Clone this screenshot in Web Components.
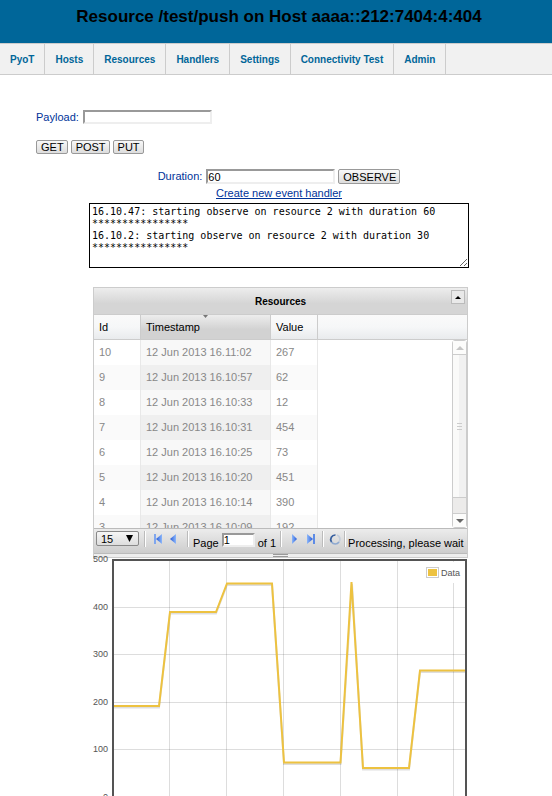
<!DOCTYPE html>
<html lang="en">
<head>
<meta charset="utf-8">
<title>PyoT resource</title>
<style>
body { margin: 0; background: #fff; color: #039; font: 11px/13px "Liberation Sans", Arial, sans-serif; }
</style>
</head>
<body>
<pyot-page></pyot-page>
<script>
const define = (name, html, setup) => customElements.define(name, class extends HTMLElement {
  constructor() {
    super();
    this.attachShadow({ mode: "open" }).innerHTML = html;
  }
  connectedCallback() { if (setup) setup(this, this.shadowRoot); }
});

define("page-header", `
<style>
:host { display: block; height: 43px; background: #069; color: #000; text-align: center; padding: 0 0 0 6px; box-sizing: border-box; }
h1 { margin: 0; font-size: 17px; line-height: 34px; white-space: nowrap; }
</style>
<h1><slot></slot></h1>`);

define("nav-bar", `
<style>
:host { display: block; }
nav { display: flex; height: 30px; background: #f1f1f1; border: solid #ccc; border-width: 1px 0; }
a { padding: 0 10px; border-right: 1px solid #ccc; color: #069; font-weight: bold; font-size: 10px; line-height: 31px; text-decoration: none; white-space: nowrap; }
</style>
<nav></nav>`, (el, root) => {
  root.querySelector("nav").innerHTML = el.getAttribute("items").split(",").map(t => `<a href="#">${t}</a>`).join("");
});

define("push-button", `
<style>
:host { display: inline-flex; }
button { font: 11px/12px "Liberation Sans", Arial, sans-serif; color: #000; height: var(--h, 14px); padding: 0 3px 0 4px; border: 1px solid #999; border-radius: 2px; background: linear-gradient(#f8f8f8, #ddd); }
</style>
<button type="button"><slot></slot></button>`);

define("text-field", `
<style>
:host { display: inline-flex; align-items: center; gap: 4px; }
input { box-sizing: border-box; width: 129px; height: var(--h, 14px); padding: 0; border: 2px solid; border-color: #999 #eee #eee #999; border-radius: 0; background: #fff; color: #000; font: 11px/11px "Liberation Sans", Arial, sans-serif; }
</style>
<label for="f"></label><input id="f" type="text">`, (el, root) => {
  root.querySelector("label").textContent = el.getAttribute("label");
  root.querySelector("input").value = el.getAttribute("value") || "";
});

define("log-area", `
<style>
:host { display: block; width: 380px; max-width: 100%; }
textarea { display: block; box-sizing: border-box; width: 100%; height: 65px; margin: 0; padding: 2px; border: 1px solid #000; background: #fff; color: #000; font: 10px/12px "DejaVu Sans Mono", monospace; }
</style>
<textarea aria-label="Log"></textarea>`, (el, root) => {
  root.querySelector("textarea").value = el.textContent.trim();
});

define("pager-bar", `
<style>
:host { display: flex; box-sizing: border-box; height: 25px; padding: 2px 0 0 2px; border-top: 1px solid #bbb; background: linear-gradient(#ececec, #cdcdcd); color: #000; overflow: hidden; white-space: nowrap; }
.size { position: relative; display: block; width: 43px; height: 15px; flex: none; }
select { appearance: none; box-sizing: border-box; width: 43px; height: 15px; margin: 0; padding: 0 4px; border: 1px solid #888; border-radius: 2px; background: linear-gradient(#f6f6f6, #ddd); font: 11px/12px "Liberation Sans", Arial, sans-serif; color: #000; }
.size svg { position: absolute; right: 6px; top: 4px; pointer-events: none; }
i { flex: none; width: 1px; height: 16px; margin: 0 4px; background: #bbb; border-right: 1px solid #fff; }
button { flex: none; width: 16px; height: 16px; padding: 0; border: 0; background: none; }
svg { display: block; }
.page { display: flex; gap: 3px; line-height: 20px; padding-top: 2px; }
.page input { box-sizing: border-box; width: 33px; height: 14px; padding: 0; border: 2px solid; border-color: #999 #eee #eee #999; font: 11px/11px "Liberation Sans", Arial, sans-serif; }
.msg { line-height: 20px; padding-top: 2px; }
.size + i { margin: 0 5px; }
</style>
<span class="size"><select aria-label="Rows per page"><option>15</option></select><svg width="7" height="7"><path d="M0 0H7L3.5 7Z"/></svg></span>
<i></i>
<button aria-label="First page"><svg width="16" height="16"><defs><linearGradient id="a"><stop stop-color="#2458d8"/><stop offset="1" stop-color="#8db8fa"/></linearGradient></defs><path d="M3 3h2v10H3z" fill="#7fa6ee"/><path d="M11 3v10L5 8z" fill="url(#a)"/></svg></button>
<button aria-label="Previous page"><svg width="16" height="16"><defs><linearGradient id="b"><stop stop-color="#2458d8"/><stop offset="1" stop-color="#8db8fa"/></linearGradient></defs><path d="M9 3v10L3 8z" fill="url(#b)"/></svg></button>
<i></i>
<label class="page">Page <input type="text" value="1"><span>of 1</span></label>
<i></i>
<button aria-label="Next page"><svg width="16" height="16"><defs><linearGradient id="c"><stop stop-color="#8db8fa"/><stop offset="1" stop-color="#2458d8"/></linearGradient></defs><path d="M6 3v10L11 8z" fill="url(#c)"/></svg></button>
<button aria-label="Last page"><svg width="16" height="16"><defs><linearGradient id="d"><stop stop-color="#8db8fa"/><stop offset="1" stop-color="#2458d8"/></linearGradient></defs><path d="M11 3h2v10H11z" fill="#5d8be6"/><path d="M5 3v10L11 8z" fill="url(#d)"/></svg></button>
<i style="margin-right:3px"></i>
<button aria-label="Refresh"><svg width="16" height="16" fill="none" stroke-width="1.7"><path d="M10 4A4.500 4.500 0 0 1 12 11" stroke="#c3cddb"/><path d="M12 11A4.500 4.500 0 0 1 4.500 11" stroke="#8ea9d0"/><path d="M4.500 11A4.500 4.500 0 0 1 8.500 4" stroke="#365f9f"/></svg></button>
<i style="margin:0 2px 0 1px"></i>
<span class="msg">Processing, please wait</span>`);

define("scroll-track", `
<style>
:host { display: flex; flex-direction: column; box-sizing: border-box; width: 15px; border: 1px solid #ccc; border-radius: 3px; background: #ecebea; }
span { display: grid; place-items: center; height: 13px; background: #fcfcfb; }
.up { border-bottom: 1px solid #ccc; }
.down { border-top: 1px solid #ccc; }
.thumb { flex: 1; border-bottom: 1px solid #ccc; margin-bottom: 15px; background: linear-gradient(90deg, #fafaf9 50%, #f1f1f1 50%); }
svg { display: block; }
</style>
<span class="up"><svg width="8" height="4"><path d="M4 0L8 4H0z" fill="#c6c6c6"/></svg></span>
<span class="thumb"><svg width="5" height="7"><path d="M0 .5H5M0 3.500H5M0 6.500H5" stroke="#ccc"/></svg></span>
<span class="down"><svg width="8" height="4"><path d="M4 4L8 0H0z" fill="#666"/></svg></span>`);

define("resource-grid", `
<style>
:host { display: block; box-sizing: border-box; border: 1px solid #ccc; color: #000; }
.title { position: relative; display: block; height: 26px; border-bottom: 1px solid #ccc; background: linear-gradient(#ededed, #d5d5d5 60%); font-size: 10px; font-weight: bold; line-height: 27px; text-align: center; }
.title button { position: absolute; right: 2px; top: 2px; width: 14px; height: 14px; padding: 0; border: 1px solid #bbb; background: #e9e9e9; display: grid; place-items: center; }
.body { display: flex; height: 213px; overflow: hidden; background: linear-gradient(#fafafa, #f6f7f8 12px, #e9ebed 24px, #ccc 24px, #ccc 25px, #fff 25px); }
.view { flex: 1; overflow: hidden; }
table { border-collapse: separate; border-spacing: 0; table-layout: fixed; width: 224px; }
th, td { box-sizing: border-box; height: 25px; padding: 0 0 0 5px; border-right: 1px solid #e8e8e8; text-align: left; font-weight: normal; line-height: 24px; white-space: nowrap; }
th { position: relative; border-right-color: #ccc; border-bottom: 1px solid #ccc; }
th svg { position: absolute; left: 62px; top: 0; }
th:nth-child(2) { background: linear-gradient(#ededed, #d2d2d2 60%); }
td { padding-bottom: 1px; color: #888; background: #fff; }
tr:nth-child(even) td { background: #fafafa; }
td:nth-child(2) { background: #f8f8f8; }
tr:nth-child(even) td:nth-child(2) { background: #efefef; }
scroll-track { margin-top: 25px; height: 188px; }
.grip { height: 3px; border-top: 1px solid #bbb; background: #eee; display: grid; justify-items: center; }
.grip::after { content: ""; width: 15px; height: 1px; border: solid #999; border-width: 1px 0; }
svg { display: block; }
</style>
<div class="title">Resources<button aria-label="Collapse"><svg width="6" height="3"><path d="M3 0L6 3H0z"/></svg></button></div>
<div class="body"><div class="view"><table>
<colgroup><col style="width:47px"><col style="width:130px"><col style="width:47px"></colgroup>
<thead><tr><th>Id</th><th>Timestamp<svg width="5" height="3"><path d="M0 0H5L2.500 3z" fill="#777"/></svg></th><th>Value</th></tr></thead>
<tbody></tbody></table></div><scroll-track></scroll-track></div>
<pager-bar></pager-bar>
<div class="grip"></div>`, (el, root) => {
  const rows = [[10, "11:02", 267], [9, "10:57", 62], [8, "10:33", 12], [7, "10:31", 454], [6, "10:25", 73], [5, "10:20", 451], [4, "10:14", 390], [3, "10:09", 192]];
  root.querySelector("tbody").innerHTML = rows.map(([id, t, v]) => `<tr><td>${id}</td><td>12 Jun 2013 16.${t}</td><td>${v}</td></tr>`).join("");
});

define("data-chart", `
<style>
:host { display: grid; grid-template-columns: 15px minmax(0, 1fr); column-gap: 3px; color: #545454; font-size: 9px; line-height: 12px; }
.axis { display: flex; flex-direction: column; justify-content: space-between; height: 250px; text-align: right; }
.plot { position: relative; padding-top: 5px; }
.plot svg { display: block; width: 100%; }
.key { position: absolute; right: 6px; top: 9px; height: 21px; display: flex; align-items: center; gap: 2px; padding: 0 2px; background: #fff; }
.key::before { content: ""; width: 9px; height: 7px; border: 1px solid #ccc; padding: 1px; background: #edc240 content-box; }
</style>
<div class="axis"><span>500</span><span>400</span><span>300</span><span>200</span><span>100</span><span>0</span></div>
<div class="plot"><svg viewBox="111 558 357 240" fill="none">
<path d="M169.500 560V797M226.500 560V797M283.500 560V797M340.500 560V797M397.500 560V797M453.500 560V797M113 607.500H466M113 654.500H466M113 702.500H466M113 749.500H466" stroke="#545454" stroke-opacity=".2"/>
<path d="M113 707.500H159L170 613.500H216L227 585H272L284 764H340.500L352 584L363 769.500H409L420 672H466" stroke="#000" stroke-opacity=".13" stroke-width="2"/>
<path d="M113 706H159L170 612H216L227 583.500H272L284 762.500H340.500L351.500 582L363 768H409L420 670.500H466" stroke="#edc240" stroke-width="2"/>
<rect x="113" y="560" width="353" height="237" stroke="#545454" stroke-width="2"/>
</svg><div class="key">Data</div></div>`);

define("pyot-page", `
<style>
:host { display: block; }
main { display: block; padding: 35px 27px 0 36px; }
.row { display: flex; gap: 3px; align-items: center; }
.payload { height: 14px; margin-bottom: 16px; }
.observe { display: flex; flex-direction: column; align-items: center; margin-top: 15px; padding-right: 3px; --h: 15px; }
a { color: #039; line-height: 13px; margin: 3px 0; }
.panel { width: 375px; max-width: 100%; margin: 19px auto 0; }
data-chart { margin-top: -5px; }
</style>
<page-header>Resource /test/push on Host aaaa::212:7404:4:404</page-header>
<nav-bar items="PyoT,Hosts,Resources,Handlers,Settings,Connectivity Test,Admin"></nav-bar>
<main>
<div class="row payload"><text-field label="Payload:"></text-field></div>
<div class="row"><push-button>GET</push-button><push-button>POST</push-button><push-button>PUT</push-button></div>
<div class="observe">
<div class="row"><text-field label="Duration:" value="60"></text-field><push-button>OBSERVE</push-button></div>
<a href="#">Create new event handler</a>
<log-area>16.10.47: starting observe on resource 2 with duration 60
****************
16.10.2: starting observe on resource 2 with duration 30
****************</log-area>
</div>
<div class="panel"><resource-grid></resource-grid><data-chart></data-chart></div>
</main>`);
</script>
</body>
</html>
